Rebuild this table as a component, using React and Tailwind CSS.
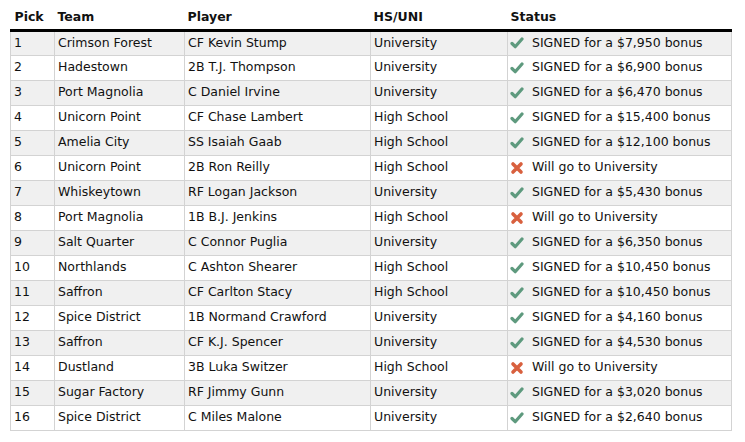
const rows = [
  [1, 'Crimson Forest', 'CF Kevin Stump', 'University', true, '$7,950'],
  [2, 'Hadestown', '2B T.J. Thompson', 'University', true, '$6,900'],
  [3, 'Port Magnolia', 'C Daniel Irvine', 'University', true, '$6,470'],
  [4, 'Unicorn Point', 'CF Chase Lambert', 'High School', true, '$15,400'],
  [5, 'Amelia City', 'SS Isaiah Gaab', 'High School', true, '$12,100'],
  [6, 'Unicorn Point', '2B Ron Reilly', 'High School', false],
  [7, 'Whiskeytown', 'RF Logan Jackson', 'University', true, '$5,430'],
  [8, 'Port Magnolia', '1B B.J. Jenkins', 'High School', false],
  [9, 'Salt Quarter', 'C Connor Puglia', 'University', true, '$6,350'],
  [10, 'Northlands', 'C Ashton Shearer', 'High School', true, '$10,450'],
  [11, 'Saffron', 'CF Carlton Stacy', 'High School', true, '$10,450'],
  [12, 'Spice District', '1B Normand Crawford', 'University', true, '$4,160'],
  [13, 'Saffron', 'CF K.J. Spencer', 'University', true, '$4,530'],
  [14, 'Dustland', '3B Luka Switzer', 'High School', false],
  [15, 'Sugar Factory', 'RF Jimmy Gunn', 'University', true, '$3,020'],
  [16, 'Spice District', 'C Miles Malone', 'University', true, '$2,640'],
];

function Check() {
  return (
    <svg width="14" height="14" viewBox="0 0 14 14" className="shrink-0">
      <path d="M2 7.5 L5.2 10.7 L12 3" fill="none" stroke="#5e9a7e" strokeWidth="3.2" strokeLinecap="round" strokeLinejoin="round" />
    </svg>
  );
}

function Cross() {
  return (
    <svg width="14" height="14" viewBox="0 0 14 14" className="shrink-0">
      <path d="M3 3 L11 11 M11 3 L3 11" stroke="#d8603e" strokeWidth="3.6" strokeLinecap="round" />
    </svg>
  );
}

export default function App() {
  return (
    <div className="w-[745px] h-[442px] bg-white pl-[10px] font-['DejaVu_Sans',sans-serif] text-[12.5px] text-[#111]">
      <table className="w-[721px] table-fixed border-collapse">
        <colgroup>
          <col className="w-[44px]" />
          <col className="w-[130px]" />
          <col className="w-[186px]" />
          <col className="w-[137px]" />
          <col className="w-[224px]" />
        </colgroup>
        <thead>
          <tr className="h-[30px] border-b-[3px] border-black text-left align-middle">
            <th className="pl-[4px] pt-[7px] font-bold">Pick</th>
            <th className="pl-[3px] pt-[7px] font-bold">Team</th>
            <th className="pl-[3px] pt-[7px] font-bold">Player</th>
            <th className="pl-[3px] pt-[7px] font-bold">HS/UNI</th>
            <th className="pl-[3px] pt-[7px] font-bold">Status</th>
          </tr>
        </thead>
        <tbody>
          {rows.map(([pick, team, player, school, signed, bonus]) => (
            <tr key={pick} className={`h-[25px] ${pick % 2 ? 'bg-[#f0f0f0]' : 'bg-white'}`}>
              <td className="border border-[#d3d3d3] pl-[3px]">{pick}</td>
              <td className="border border-[#d3d3d3] pl-[3px]">{team}</td>
              <td className="border border-[#d3d3d3] pl-[3px]">{player}</td>
              <td className="border border-[#d3d3d3] pl-[3px]">{school}</td>
              <td className="border border-[#d3d3d3] pl-[2px]">
                <div className="flex items-center gap-[8px]">
                  {signed ? <Check /> : <Cross />}
                  <span>{signed ? `SIGNED for a ${bonus} bonus` : 'Will go to University'}</span>
                </div>
              </td>
            </tr>
          ))}
        </tbody>
      </table>
    </div>
  );
}
